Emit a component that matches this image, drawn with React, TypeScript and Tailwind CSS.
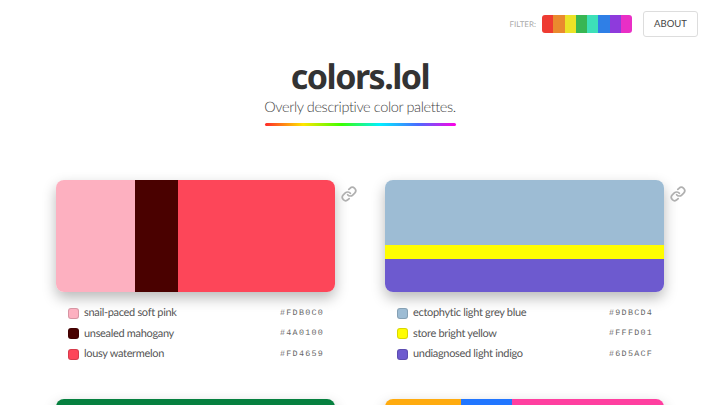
import React from "react";
import { Link } from "lucide-react";

const filterColors = ["#ee3b32", "#ea8a2e", "#ebe327", "#38b653", "#3de0b8", "#2f7fe6", "#8e3bdc", "#e92fc6"];

type Swatch = { hex: string; size: number; name?: string };
type Palette = { dir: "row" | "col"; swatches: Swatch[] };

const palettes: Palette[] = [
  {
    dir: "row",
    swatches: [
      { name: "snail-paced soft pink", hex: "#FDB0C0", size: 79 },
      { name: "unsealed mahogany", hex: "#4A0100", size: 43 },
      { name: "lousy watermelon", hex: "#FD4659", size: 157 },
    ],
  },
  {
    dir: "col",
    swatches: [
      { name: "ectophytic light grey blue", hex: "#9DBCD4", size: 65 },
      { name: "store bright yellow", hex: "#FFFD01", size: 14 },
      { name: "undiagnosed light indigo", hex: "#6D5ACF", size: 33 },
    ],
  },
  // bottom row is cut off by the fold, only the top of the bars shows
  { dir: "row", swatches: [{ hex: "#06803F", size: 279 }] },
  {
    dir: "row",
    swatches: [
      { hex: "#FFAB0F", size: 76 },
      { hex: "#2176FF", size: 51 },
      { hex: "#FF3FA0", size: 152 },
    ],
  },
];

function PaletteCard({ palette }: { palette: Palette }) {
  const isRow = palette.dir === "row";
  const named = palette.swatches.filter((s) => s.name);
  return (
    <div className="relative w-[279px]">
      <div
        className={`flex h-[112px] w-[279px] overflow-hidden rounded-lg shadow-[0_6px_14px_rgba(0,0,0,0.28)] ${
          isRow ? "flex-row" : "flex-col"
        }`}
      >
        {palette.swatches.map((s) => (
          <div
            key={s.hex}
            style={isRow ? { width: s.size, backgroundColor: s.hex } : { height: s.size, backgroundColor: s.hex }}
          />
        ))}
      </div>
      {named.length > 0 && (
        <>
          <Link className="absolute left-[285px] top-[6px] h-4 w-4 text-[#b0b0b0]" strokeWidth={2.6} />
          <ul className="mt-[11px] flex flex-col pl-3 pr-[11px]">
            {named.map((s) => (
              <li key={s.hex} className="flex h-[20.5px] items-center">
                <span
                  className="mr-[5px] h-[11px] w-[11px] rounded-[3px] border border-black/15"
                  style={{ backgroundColor: s.hex }}
                />
                <span className="flex-1 text-[11px] tracking-[-0.32px] text-[#555]">{s.name}</span>
                <span className="font-['Liberation_Mono'] text-[8.4px] tracking-[1.25px] text-[#666]">{s.hex}</span>
              </li>
            ))}
          </ul>
        </>
      )}
    </div>
  );
}

export default function App() {
  return (
    <div className="h-[405px] w-[720px] overflow-hidden bg-white font-['Lato',sans-serif] [text-rendering:geometricPrecision]">
      <div className="flex items-center justify-end pr-[22px] pt-[11px]">
        <span className="mr-[6px] text-[8px] text-[#aaa]">FILTER:</span>
        <div className="mr-[11px] flex h-[18px] overflow-hidden rounded-[3px]">
          {filterColors.map((c) => (
            <div key={c} className="h-full w-[11.25px]" style={{ backgroundColor: c }} />
          ))}
        </div>
        <button className="flex h-[26px] w-[55px] items-center justify-center rounded-[3px] border border-[#ddd] text-[9.5px] text-[#444]">
          ABOUT
        </button>
      </div>

      <div className="mt-[17px] flex flex-col items-center">
        <h1 className="font-['Noto_Sans',sans-serif] text-[34px] leading-[44px] font-bold tracking-[-1.5px] text-[#333]">
          colors.lol
        </h1>
        <p className="mt-0 text-[14.5px] leading-[20px] font-light tracking-[-0.38px] text-[#444]">
          Overly descriptive color palettes.
        </p>
        <div className="mt-[5px] h-[3px] w-[191px] rounded-sm bg-[linear-gradient(to_right,#ff2a2a,#ffe600,#3cff00,#00f0ff,#4a6bff,#ff00e6)]" />
      </div>

      <div className="mt-[54px] grid grid-cols-[279px_279px] justify-center gap-x-[50px] gap-y-[34px]">
        {palettes.map((p) => (
          <PaletteCard key={p.swatches[0].hex} palette={p} />
        ))}
      </div>
    </div>
  );
}
